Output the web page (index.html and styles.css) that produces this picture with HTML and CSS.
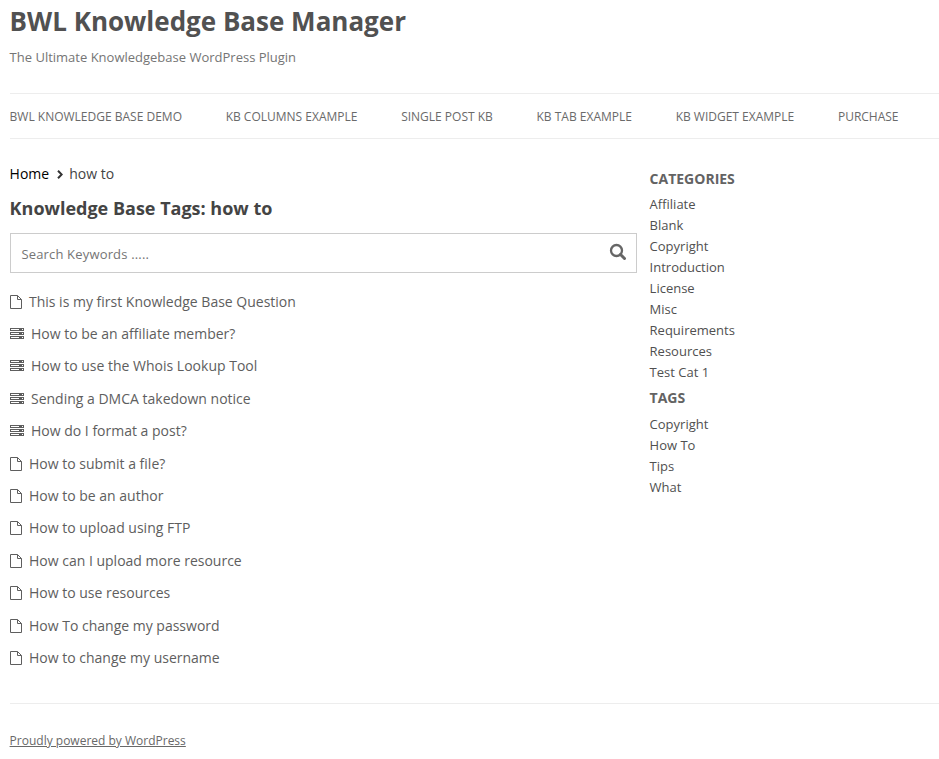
FILE: index.html
```html
<!DOCTYPE html>
<html lang="en">
<head>
<meta charset="utf-8">
<title>BWL Knowledge Base Manager</title>
<link rel="stylesheet" href="styles.css">
</head>
<body>
<svg width="0" height="0" class="defs">
  <symbol id="page" viewBox="0 0 12 14"><path d="M.5.5h7l4 4v9H.5zM7.5.5v4h4" fill="none" stroke="currentColor"/></symbol>
  <symbol id="stack" viewBox="0 0 14 11"><path d="M0 0h14v3H0zM0 4h14v3H0zM0 8h14v3H0z" fill="currentColor"/><path d="M1 1.5h8M1 5.5h8M1 9.5h8M12 1.5h1M12 5.5h1M12 9.5h1" stroke="#fff"/></symbol>
</svg>
<header>
  <h1>BWL Knowledge Base Manager</h1>
  <p class="tagline">The Ultimate Knowledgebase WordPress Plugin</p>
</header>
<nav class="menu">
  <a>BWL KNOWLEDGE BASE DEMO</a><a>KB COLUMNS EXAMPLE</a><a>SINGLE POST KB</a><a>KB TAB EXAMPLE</a><a>KB WIDGET EXAMPLE</a><a>PURCHASE</a>
</nav>
<div class="columns">
  <main>
    <div class="crumbs"><a>Home</a><svg width="6" height="9" viewBox="0 0 6 9"><path d="M1 .8l3.7 3.7L1 8.2" fill="none" stroke="#333" stroke-width="2"/></svg><span>how to</span></div>
    <h2>Knowledge Base Tags: how to</h2>
    <div class="search"><span>Search Keywords .....</span><svg width="18" height="18" viewBox="0 0 18 18" fill="none" stroke="#666"><circle cx="7.5" cy="7.5" r="5.5" stroke-width="2.3"/><path d="M11.5 11.5l4 4" stroke-width="3" stroke-linecap="round"/></svg></div>
    <ul class="posts">
      <li><svg class="page"><use href="#page"/></svg>This is my first Knowledge Base Question</li>
      <li><svg class="stack"><use href="#stack"/></svg>How to be an affiliate member?</li>
      <li><svg class="stack"><use href="#stack"/></svg>How to use the Whois Lookup Tool</li>
      <li><svg class="stack"><use href="#stack"/></svg>Sending a DMCA takedown notice</li>
      <li><svg class="stack"><use href="#stack"/></svg>How do I format a post?</li>
      <li><svg class="page"><use href="#page"/></svg>How to submit a file?</li>
      <li><svg class="page"><use href="#page"/></svg>How to be an author</li>
      <li><svg class="page"><use href="#page"/></svg>How to upload using FTP</li>
      <li><svg class="page"><use href="#page"/></svg>How can I upload more resource</li>
      <li><svg class="page"><use href="#page"/></svg>How to use resources</li>
      <li><svg class="page"><use href="#page"/></svg>How To change my password</li>
      <li><svg class="page"><use href="#page"/></svg>How to change my username</li>
    </ul>
  </main>
  <aside>
    <h3>CATEGORIES</h3>
    <ul><li>Affiliate</li><li>Blank</li><li>Copyright</li><li>Introduction</li><li>License</li><li>Misc</li><li>Requirements</li><li>Resources</li><li>Test Cat 1</li></ul>
    <h3>TAGS</h3>
    <ul><li>Copyright</li><li>How To</li><li>Tips</li><li>What</li></ul>
  </aside>
</div>
<footer><a>Proudly powered by WordPress</a></footer>
</body>
</html>
```
FILE: styles.css
```css
* { box-sizing: border-box; }
body { margin: 0; padding-left: 9.6px; height: 759px; overflow: hidden; background: #fff; color: #444; font-family: "Open Sans", sans-serif; font-size: 14px; }
h1, h2, h3, p, ul { margin: 0; padding: 0; }
ul { list-style: none; }
.defs { display: none; }
header { height: 93px; padding-top: 5px; }
h1 { font-size: 26px; line-height: 32px; color: #515151; }
.tagline { margin-top: 10px; font-size: 13px; line-height: 20px; color: #757575; }
.menu { display: flex; gap: 43.7px; height: 46px; border-top: 1px solid #ededed; border-bottom: 1px solid #ededed; font-size: 12px; line-height: 45px; color: #6a6a6a; white-space: nowrap; }
.columns { display: flex; height: 564px; }
main { width: 627px; margin-right: 13px; }
.crumbs { display: flex; align-items: center; height: 20px; margin-top: 24px; }
.crumbs a { color: #000; }
.crumbs svg { margin: 2px 6px 0 8px; }
h2 { margin-top: 13px; font-size: 18px; line-height: 25px; }
.search { display: flex; justify-content: space-between; align-items: center; height: 40px; margin-top: 12px; padding: 0 9px 0 10.8px; border: 1px solid #ccc; font-size: 13px; color: #757575; }
.search span { padding-top: 2px; letter-spacing: .17px; }
.search svg { margin-bottom: 2px; }
.posts { margin-top: 12px; }
.posts li { display: flex; align-items: center; height: 32.4px; color: #5e5e5e; }
.page { width: 12px; height: 14px; margin: 1px 7.4px 0 0; }
.stack { width: 14px; height: 11px; margin-right: 7.4px; }
aside { padding-top: 29px; font-size: 13px; line-height: 21px; color: #505050; }
h3 { font-size: 14px; line-height: 21px; margin-bottom: 5px; color: #636363; }
aside ul + h3 { margin-top: 4px; margin-bottom: 6px; }
footer { border-top: 1px solid #ededed; padding-top: 27px; font-size: 12px; line-height: 20px; color: #686868; }
footer a { text-decoration: underline; }
```
